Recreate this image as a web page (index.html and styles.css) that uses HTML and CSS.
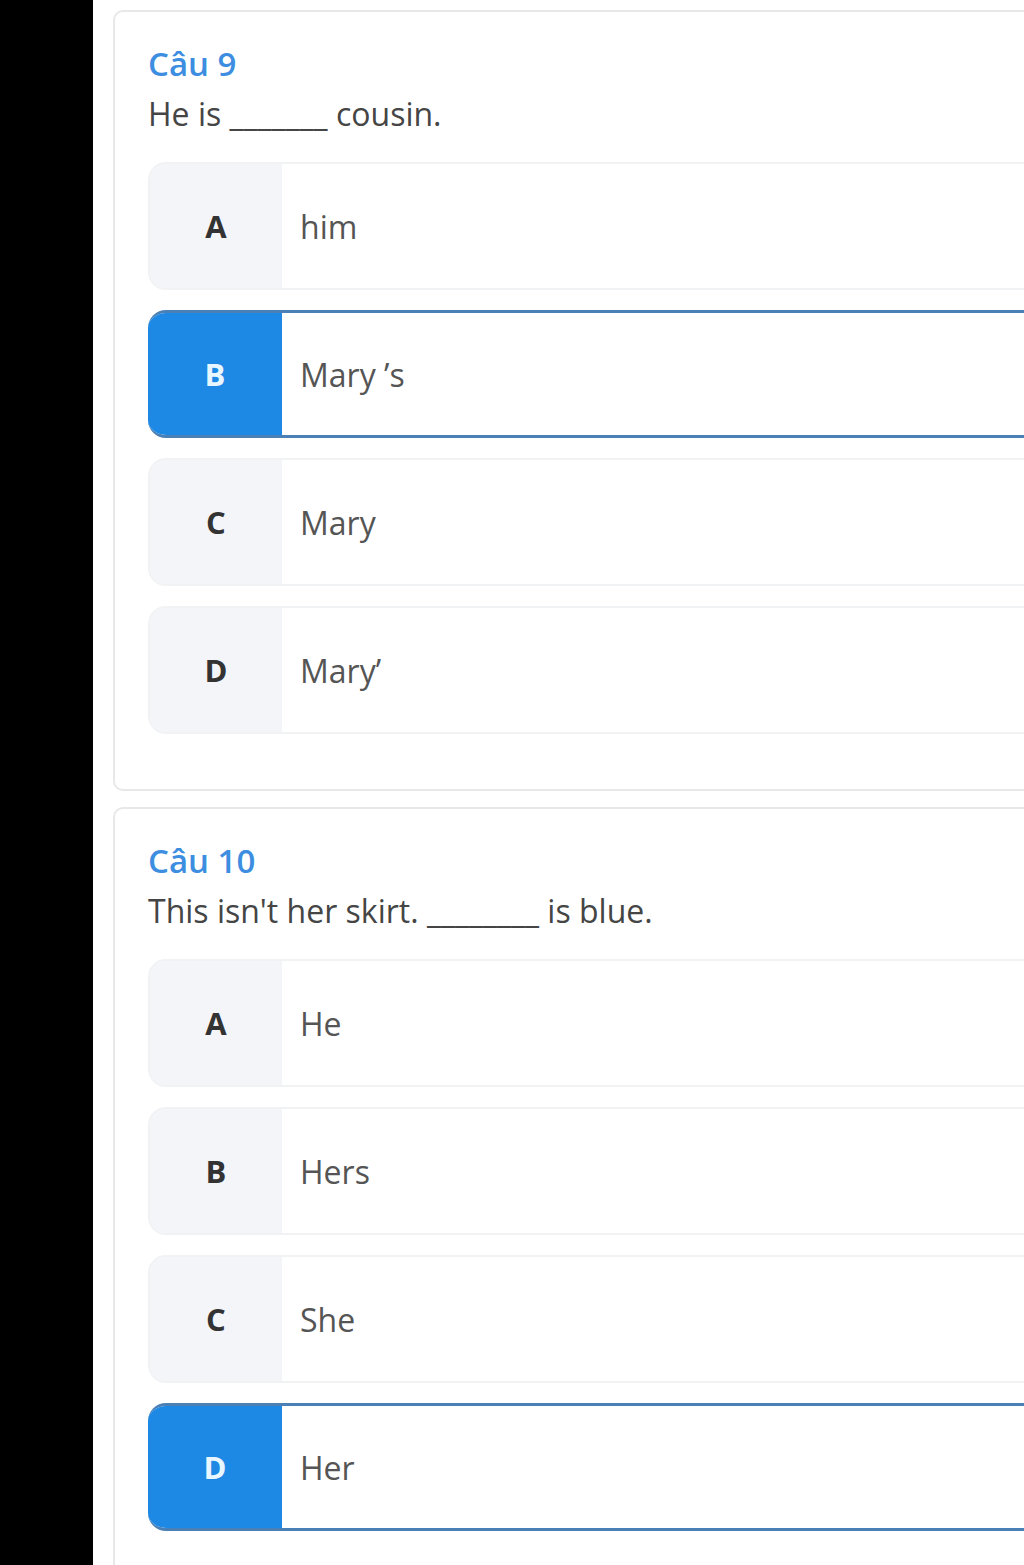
FILE: index.html
```html
<!DOCTYPE html>
<html lang="vi">
<head>
<meta charset="utf-8">
<title>Quiz</title>
<link rel="stylesheet" href="styles.css">
</head>
<body>
<div class="page">
  <aside class="sidebar"></aside>
  <main class="main">
    <section class="card">
      <h2 class="q-title">Câu 9</h2>
      <p class="q-text">He is _______ cousin.</p>
      <div class="options">
        <div class="option"><div class="opt-letter">A</div><div class="opt-text">him</div></div>
        <div class="option selected"><div class="opt-letter">B</div><div class="opt-text">Mary ’s</div></div>
        <div class="option"><div class="opt-letter">C</div><div class="opt-text">Mary</div></div>
        <div class="option"><div class="opt-letter">D</div><div class="opt-text">Mary’</div></div>
      </div>
    </section>
    <section class="card">
      <h2 class="q-title">Câu 10</h2>
      <p class="q-text">This isn't her skirt. ________ is blue.</p>
      <div class="options">
        <div class="option"><div class="opt-letter">A</div><div class="opt-text">He</div></div>
        <div class="option"><div class="opt-letter">B</div><div class="opt-text">Hers</div></div>
        <div class="option"><div class="opt-letter">C</div><div class="opt-text">She</div></div>
        <div class="option selected"><div class="opt-letter">D</div><div class="opt-text">Her</div></div>
      </div>
    </section>
  </main>
</div>
</body>
</html>
```

FILE: styles.css
```css
html, body {
  margin: 0;
  padding: 0;
  overflow: hidden;
  background: #ffffff;
  font-family: "Open Sans", "Noto Sans", sans-serif;
  color: #444444;
}
.page {
  display: flex;
  width: 1024px;
  height: 1565px;
  overflow: hidden;
}
.sidebar {
  width: 93px;
  flex: 0 0 93px;
  background: #000000;
}
.main {
  flex: 1 1 auto;
  min-width: 0;
  overflow: hidden;
  padding: 10px 0 0 20px;
  display: flex;
  flex-direction: column;
  gap: 16px;
}
.card {
  width: 1000px;
  flex: 0 0 auto;
  border: 2px solid #e8e8e8;
  border-radius: 10px;
  padding: 28px 0 55px 33px;
  box-sizing: border-box;
  background: #fff;
}
.q-title {
  margin: 0;
  font-size: 33px;
  line-height: 48px;
  font-weight: 600;
  color: #3d8ee0;
}
.q-text {
  margin: 2px 0 0 0;
  font-size: 32px;
  line-height: 48px;
  color: #454545;
}
.options {
  margin-top: 24px;
  display: flex;
  flex-direction: column;
  gap: 20px;
}
.option {
  display: flex;
  height: 128px;
  box-sizing: border-box;
  border: 2px solid #f1f2f4;
  border-radius: 18px;
  overflow: hidden;
  background: #fff;
}
.opt-letter {
  width: 132px;
  flex: 0 0 132px;
  background: #f4f5f9;
  display: flex;
  align-items: center;
  justify-content: center;
  font-size: 31px;
  font-weight: 700;
  color: #333;
}
.opt-text {
  display: flex;
  align-items: center;
  padding-left: 18px;
  font-size: 32px;
  color: #555;
}
.option.selected {
  border: 3px solid #4a80b5;
  border-left: none;
}
.option.selected .opt-letter {
  background: #1e88e5;
  color: #e8f6ff;
  width: 134px;
  flex-basis: 134px;
}
```
